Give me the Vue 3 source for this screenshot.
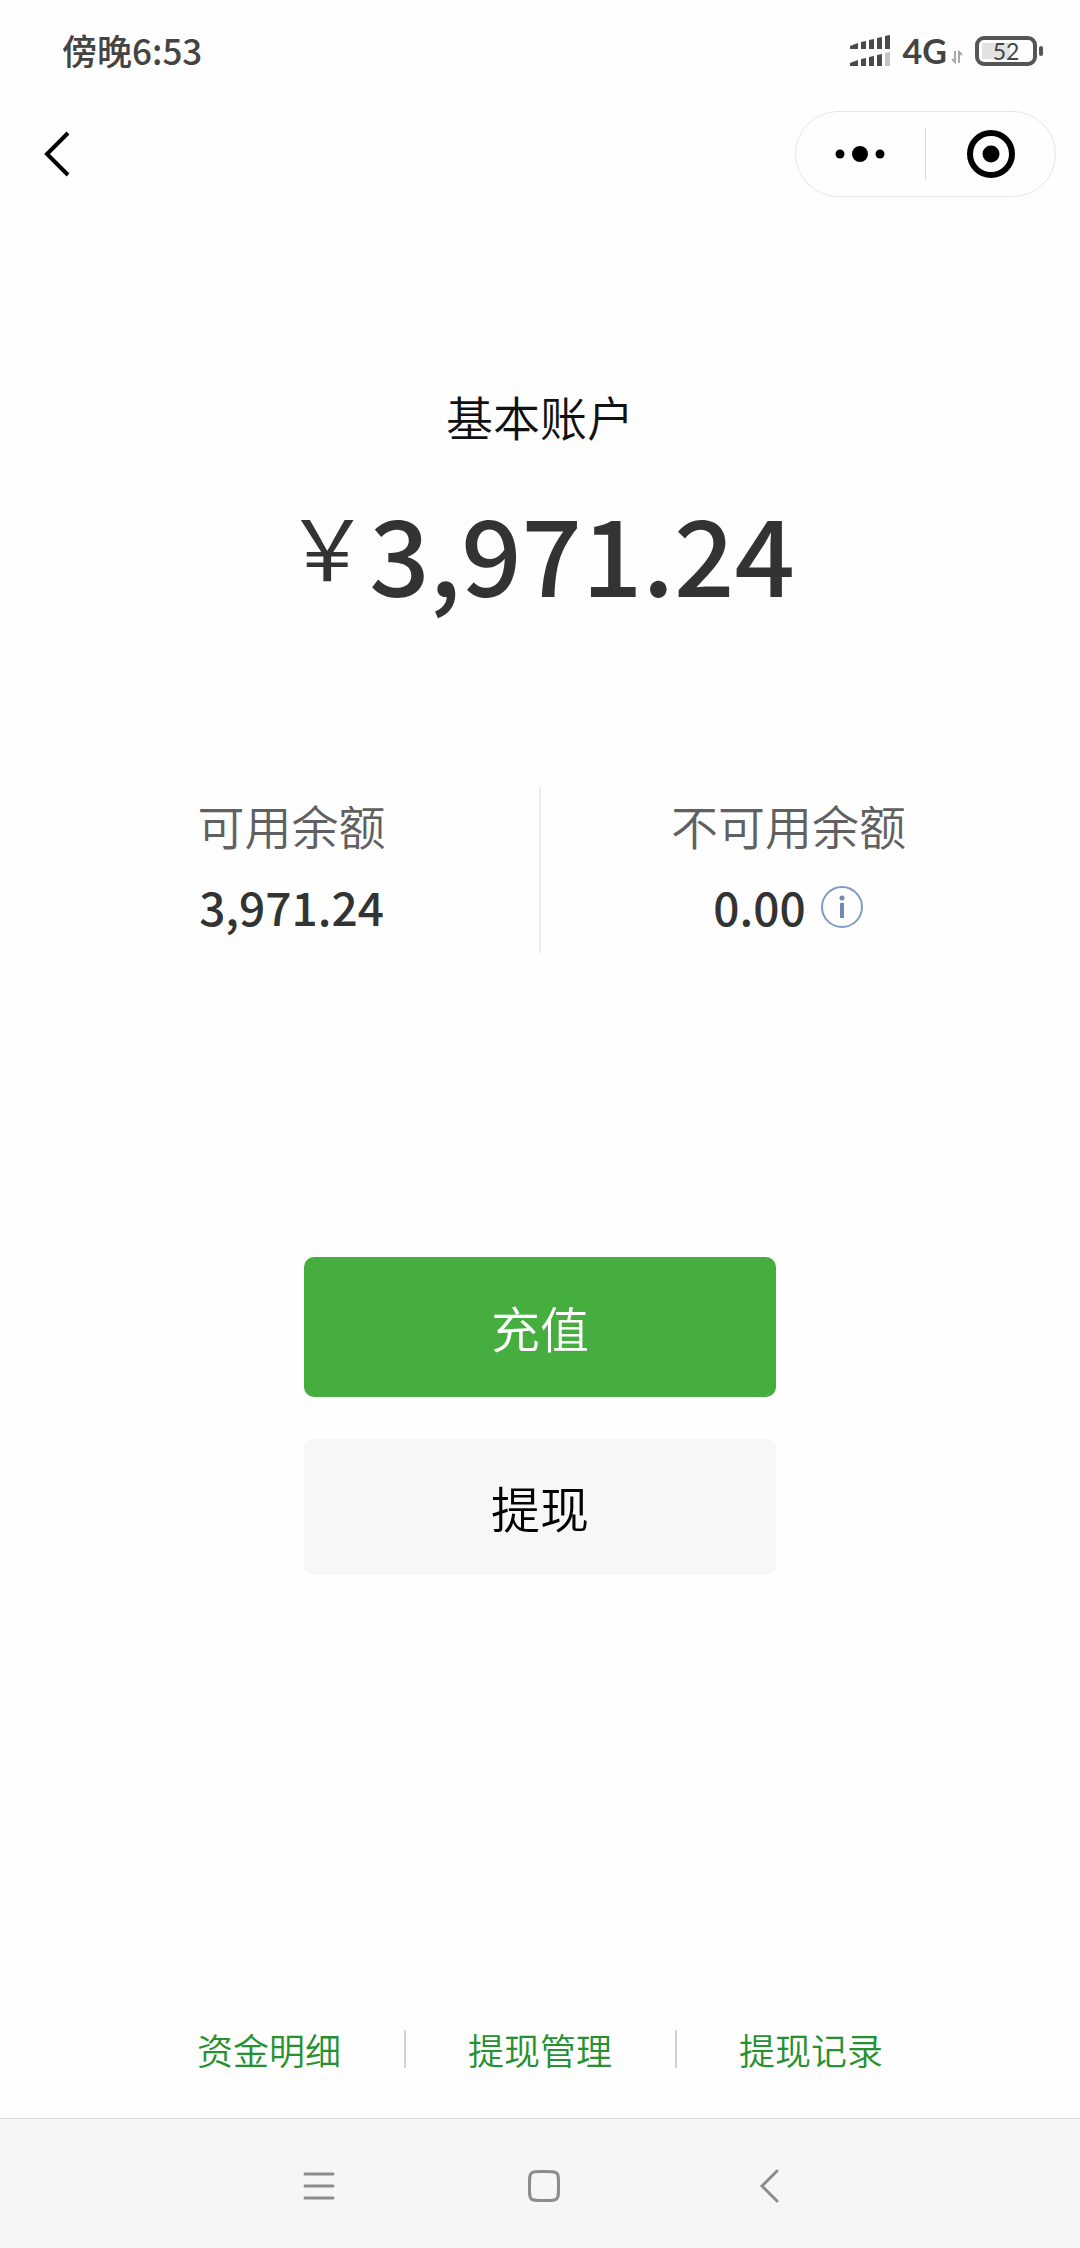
<template>
  <div class="page">
    <header class="status">
      <span class="time">傍晚6:53</span>
      <div class="status-right">
        <svg class="signal" width="42" height="34" viewBox="0 0 42 34" aria-hidden="true">
          <g fill="#4a4a4a">
            <path d="M1 12l8-3v6H1zM12 8l5-1v8h-5zM20 6l5-1v10h-5zM28 4l5-1v12h-5zM36 2l5-1v14h-5z" />
            <path d="M1 29l8-3v6H1zM12 25l5-1v8h-5zM20 23l5-1v10h-5zM28 21l5-1v12h-5z" />
          </g>
          <path fill="#c4c4c4" d="M36 19l5-1v14h-5z" />
        </svg>
        <span class="network">4G</span>
        <svg class="traffic" width="12" height="14" viewBox="0 0 12 14" aria-hidden="true">
          <path d="M4 1v11L1 9M8 13V2l3 3" fill="none" stroke="#a8a8a8" stroke-width="2" />
        </svg>
        <div class="battery">
          <div class="battery-box">
            <div class="battery-level" :style="{ width: `${battery}%` }"></div>
            <span class="battery-text">{{ battery }}</span>
          </div>
          <i class="battery-cap"></i>
        </div>
      </div>
    </header>

    <nav class="navbar">
      <button class="icon-btn" type="button" aria-label="返回">
        <svg width="28" height="48" viewBox="0 0 28 48">
          <path d="M24 3L3 24l21 21" fill="none" stroke="#000" stroke-width="4" />
        </svg>
      </button>
      <div class="capsule">
        <button class="capsule-btn" type="button" aria-label="更多">
          <svg width="52" height="18" viewBox="0 0 52 18">
            <circle cx="5" cy="9" r="4.5" />
            <circle cx="25" cy="9" r="8" />
            <circle cx="45" cy="9" r="4.5" />
          </svg>
        </button>
        <i class="capsule-line"></i>
        <button class="capsule-btn" type="button" aria-label="关闭">
          <svg width="48" height="48" viewBox="0 0 48 48">
            <circle cx="24" cy="24" r="21" fill="none" stroke="#000" stroke-width="6" />
            <circle cx="24" cy="24" r="8.5" />
          </svg>
        </button>
      </div>
    </nav>

    <main class="main">
      <h1 class="title">基本账户</h1>
      <div class="amount">
        <span class="symbol">￥</span>
        <span class="total">3,971.24</span>
      </div>

      <div class="stats">
        <div class="stat">
          <div class="label">可用余额</div>
          <div class="value">3,971.24</div>
        </div>
        <div class="stat">
          <div class="label">不可用余额</div>
          <div class="value">
            0.00
            <button class="icon-btn" type="button" aria-label="说明">
              <svg width="44" height="44" viewBox="0 0 44 44">
                <circle cx="22" cy="23" r="20" fill="none" stroke="#7c9bcb" stroke-width="2" />
                <circle cx="22" cy="14" r="2.5" fill="#7089b3" />
                <path d="M22 19v15" stroke="#7089b3" stroke-width="4" />
              </svg>
            </button>
          </div>
        </div>
      </div>

      <div class="actions">
        <button class="btn primary" type="button">充值</button>
        <button class="btn" type="button">提现</button>
      </div>

      <div class="links">
        <a v-for="item in links" :key="item" class="link" href="#">{{ item }}</a>
      </div>
    </main>

    <footer class="system">
      <button class="icon-btn" type="button" aria-label="菜单">
        <svg width="36" height="36" viewBox="0 0 36 36">
          <path d="M4 6h28M4 18h28M4 30h28" stroke="#8c8c8c" stroke-width="3" stroke-linecap="round" />
        </svg>
      </button>
      <button class="icon-btn" type="button" aria-label="主屏幕">
        <svg width="36" height="36" viewBox="0 0 36 36">
          <path
            d="M18 3.500c9 0 11 0 12.800 1.700S32.500 9 32.500 18s0 11-1.700 12.800S27 32.500 18 32.500s-11 0-12.800-1.700S3.500 27 3.500 18s0-11 1.700-12.800S9 3.500 18 3.500z"
            fill="none"
            stroke="#8c8c8c"
            stroke-width="3"
          />
        </svg>
      </button>
      <button class="icon-btn" type="button" aria-label="后退">
        <svg width="36" height="36" viewBox="0 0 36 36">
          <path d="M26 3L11 18l15 15" fill="none" stroke="#8c8c8c" stroke-width="3" stroke-linecap="round" />
        </svg>
      </button>
    </footer>
  </div>
</template>

<script setup>
  import { ref } from 'vue';
  const battery = ref(52);
  const links = ['资金明细', '提现管理', '提现记录'];
</script>

<style>
  body {
    margin: 0;
    background: #fefefe;
  }
</style>

<style scoped>
  .page {
    display: flex;
    flex-direction: column;
    min-height: 100vh;
    font-family: 'Noto Sans CJK SC', sans-serif;
    color: #333;
  }
  button {
    padding: 0;
    border: 0;
    background: none;
    font-family: inherit;
    cursor: pointer;
  }
  svg {
    display: block;
  }
  .status {
    display: flex;
    align-items: center;
    justify-content: space-between;
    height: 102px;
    padding: 0 37px 0 62px;
    color: #444;
  }
  .time {
    padding-bottom: 4px;
    font-size: 35px;
    font-weight: 500;
  }
  .status-right {
    display: flex;
    align-items: center;
  }
  .network {
    margin-left: 12px;
    padding-bottom: 2px;
    font-family: Lato, sans-serif;
    font-size: 34px;
    font-weight: 700;
  }
  .traffic {
    margin: 12px 12px 0 4px;
  }
  .battery {
    display: flex;
    align-items: center;
    gap: 2px;
  }
  .battery-box {
    position: relative;
    display: flex;
    align-items: center;
    justify-content: center;
    box-sizing: border-box;
    width: 62px;
    height: 30px;
    padding: 3px;
    border: 4px solid #555;
    border-radius: 9px;
  }
  .battery-level {
    position: absolute;
    top: 3px;
    bottom: 3px;
    left: 3px;
    background: #e2e2e2;
  }
  .battery-text {
    position: relative;
    font-family: Lato, sans-serif;
    font-size: 23px;
    line-height: 24px;
  }
  .battery-cap {
    width: 4px;
    height: 10px;
    border-radius: 2px;
    background: #555;
  }

  .navbar {
    display: flex;
    align-items: center;
    justify-content: space-between;
    height: 104px;
    padding: 0 24px 0 44px;
  }
  .capsule {
    display: flex;
    align-items: center;
    box-sizing: border-box;
    width: 261px;
    height: 86px;
    border: 1px solid #e6e6e6;
    border-radius: 43px;
  }
  .capsule-btn {
    display: flex;
    flex: 1;
    align-items: center;
    justify-content: center;
    height: 100%;
  }
  .capsule-line {
    width: 1px;
    height: 52px;
    background: #dcdcdc;
  }

  .main {
    display: flex;
    flex: 1;
    flex-direction: column;
    align-items: center;
    padding-top: 176px;
  }
  .title {
    margin: 0;
    font-size: 47px;
    font-weight: 350;
    line-height: 68px;
    color: #111;
  }
  .amount {
    display: flex;
    align-items: center;
    margin-top: 25px;
    line-height: 152px;
  }
  .symbol {
    padding-bottom: 12px;
    font-size: 84px;
    line-height: 140px;
  }
  .total {
    font-size: 106px;
    font-weight: 500;
  }

  .stats {
    display: flex;
    align-self: stretch;
    margin-top: 160px;
    padding: 0 44px;
  }
  .stat {
    display: flex;
    flex: 1;
    flex-direction: column;
    align-items: center;
    gap: 12px;
    padding: 4px 0 12px;
  }
  .stat + .stat {
    border-left: 2px solid #ececec;
  }
  .label {
    font-size: 47px;
    font-weight: 350;
    line-height: 68px;
    color: #606060;
  }
  .value {
    display: flex;
    align-items: center;
    gap: 14px;
    font-size: 46px;
    font-weight: 500;
    line-height: 70px;
  }

  .actions {
    display: flex;
    flex-direction: column;
    gap: 42px;
    width: 472px;
    margin-top: 304px;
  }
  .btn {
    height: 136px;
    padding-bottom: 2px;
    border-radius: 10px;
    background: #f7f7f7;
    font-size: 49px;
    font-weight: 350;
    color: #000;
  }
  .btn.primary {
    height: 140px;
    background: #45ae3f;
    color: #fff;
  }

  .links {
    display: flex;
    align-items: center;
    margin-top: auto;
    padding: 60px 0 50px;
  }
  .link {
    display: flex;
    font-size: 36px;
    font-weight: 350;
    line-height: 38px;
    color: #259130;
    text-decoration: none;
  }
  .link + .link {
    margin-left: 63px;
    padding-left: 62px;
    border-left: 2px solid #d2d2d2;
  }

  .system {
    display: flex;
    align-items: center;
    justify-content: center;
    gap: 189px;
    box-sizing: border-box;
    height: 130px;
    padding: 4px 0 0 8px;
    border-top: 1px solid #dadada;
    background: #f6f6f6;
  }
</style>
